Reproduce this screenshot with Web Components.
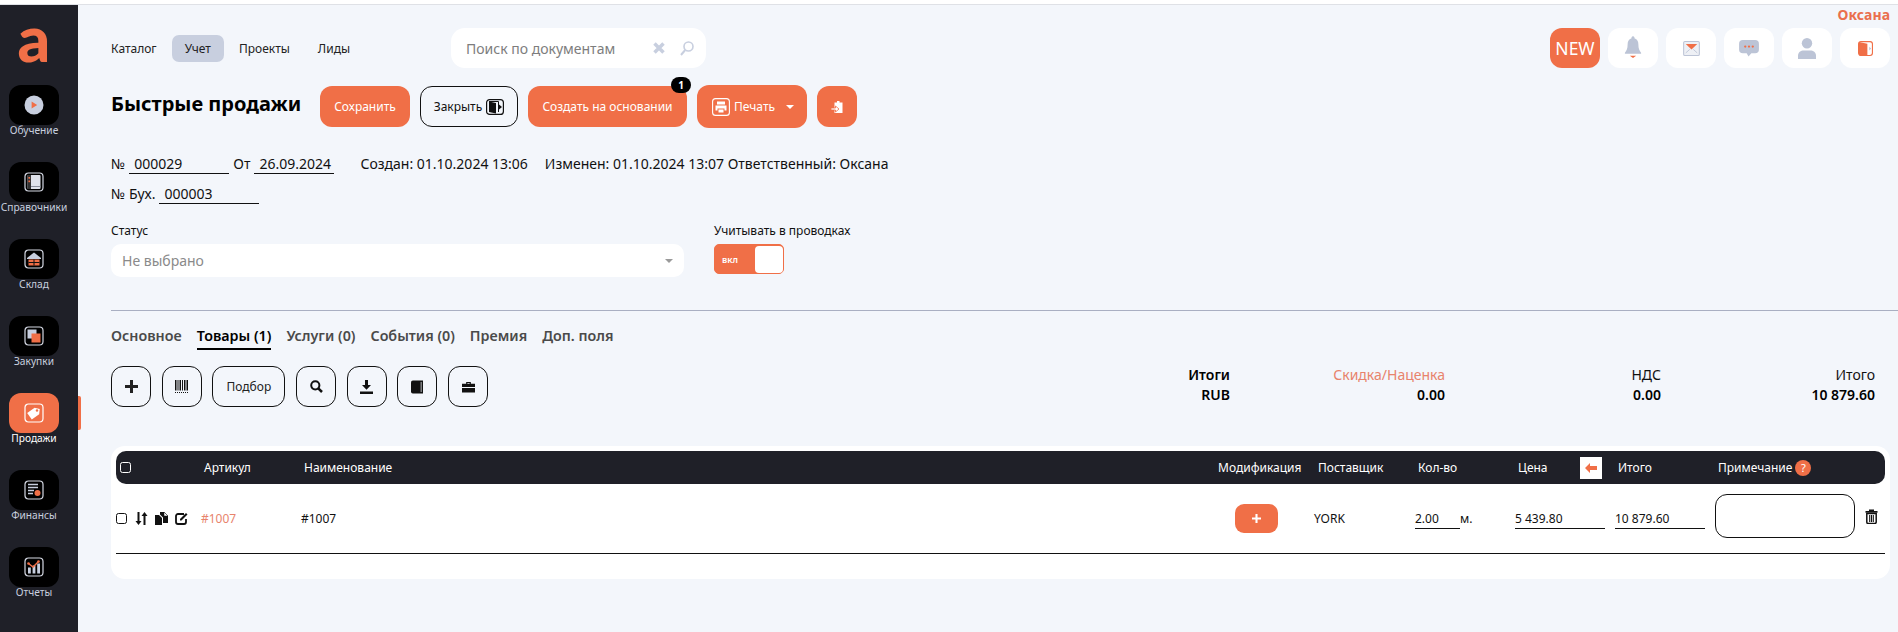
<!DOCTYPE html>
<html lang="ru">
<head>
<meta charset="utf-8">
<title>Быстрые продажи</title>
<style>
  html, body { margin: 0; height: 100%; background: #f3f6fb; }
  body { font-family: 'Noto Sans', 'Open Sans', sans-serif; color: #000; overflow: hidden; }
</style>
</head>
<body>
<erp-app></erp-app>

<script>
const ORANGE = '#f06f47';

const frame = (stroke, inner) => `<svg width="20" height="20" viewBox="0 0 20 20"><rect x="1" y="1" width="18" height="18" rx="3.5" fill="none" stroke="${stroke}" stroke-width="1.2"/>${inner}</svg>`;

const icons = {
  play: `<svg width="20" height="20" viewBox="0 0 20 20"><circle cx="10" cy="10" r="9.5" fill="#c8cfdf"/><path d="M7.6 6.6l5.6 3.4-5.6 3.4z" fill="${ORANGE}"/></svg>`,
  book: frame('#d5d9e4', `<rect x="3.500" y="3" width="13" height="14" rx="1" fill="#dfe2ea"/><rect x="3.500" y="3" width="3.500" height="14" fill="#333"/><rect x="4.400" y="5" width="1.700" height="1.700" fill="${ORANGE}"/><rect x="4.400" y="8.500" width="1.700" height="1.700" fill="${ORANGE}"/><path d="M7 14.500h9.500" stroke="#8a8f9c" stroke-width="1"/>`),
  store: frame('#d5d9e4', `<path d="M3 9l7-5.500L17 9v1H3z" fill="#c8cfdf"/><rect x="4.500" y="10.500" width="11" height="6" fill="${ORANGE}"/><path d="M10 10.500v6M4.500 13.500h11" stroke="#111" stroke-width="1"/>`),
  purchase: frame('#d5d9e4', `<rect x="3.500" y="3.500" width="9" height="9" fill="#c8cfdf"/><rect x="7.500" y="7.500" width="9" height="9" fill="${ORANGE}"/>`),
  tag: frame('#fff', `<path d="M10 3L14 6.500V15.500H6V6.500z" transform="rotate(55 10 10)" fill="#fff"/><circle cx="13" cy="7.500" r="1.200" fill="${ORANGE}"/>`),
  finance: frame('#d5d9e4', `<path d="M4 4.500h10M4 7.500h10M4 10.500h6M4 13.500h5" stroke="#c8cfdf" stroke-width="1.600"/><circle cx="13.500" cy="13" r="3" fill="${ORANGE}"/>`),
  report: frame('#d5d9e4', `<rect x="4" y="10.500" width="2.800" height="6" fill="#c8cfdf"/><rect x="8.600" y="8.500" width="2.800" height="8" fill="#c8cfdf"/><rect x="13.200" y="6.500" width="2.800" height="10" fill="#c8cfdf"/><path d="M4.500 6.500l4.500 3.500 5.500-5.500" fill="none" stroke="${ORANGE}" stroke-width="1.400"/><circle cx="4.500" cy="6.500" r="1.300" fill="${ORANGE}"/><circle cx="14.500" cy="4.500" r="1.300" fill="${ORANGE}"/>`),
  bell: `<svg width="18" height="24" viewBox="0 0 20 26"><path d="M10 0a1.600 1.600 0 0 1 1.600 2.200C15 3.200 16 6 16 9.500c0 4 1 6.500 3 8.700v1.300H1v-1.300C3 16 4 13.500 4 9.500 4 6 5 3.200 8.400 2.200A1.600 1.600 0 0 1 10 0z" fill="#bcc4d6"/><path d="M6.500 21.500h7L10 24z" fill="${ORANGE}"/></svg>`,
  mail: `<svg width="17" height="15" viewBox="0 0 19 17"><rect x=".6" y=".6" width="17.800" height="15.800" rx="1.500" fill="#eef0f5" stroke="#bcc4d6" stroke-width="1.200"/><path d="M3 3.500h13L9.500 9.500z" fill="${ORANGE}"/><path d="M3 13.500l4.500-4M16 13.500l-4.500-4" stroke="#bcc4d6" stroke-width="1"/></svg>`,
  chat: `<svg width="20" height="17" viewBox="0 0 21 18"><path d="M4 0h13a4 4 0 0 1 4 4v6a4 4 0 0 1-4 4h-4l-3 3.500L8 14H4a4 4 0 0 1-4-4V4a4 4 0 0 1 4-4z" fill="#bcc4d6"/><circle cx="6.500" cy="7" r="1.200" fill="${ORANGE}"/><circle cx="10.500" cy="7" r="1.200" fill="${ORANGE}"/><circle cx="14.500" cy="7" r="1.200" fill="${ORANGE}"/></svg>`,
  user: `<svg width="18" height="21" viewBox="0 0 19 22"><circle cx="9.500" cy="5.500" r="5.500" fill="#bcc4d6"/><path d="M0 22v-3.500C0 15 3 13 6 13h7c3 0 6 2 6 5.500V22z" fill="#bcc4d6"/></svg>`,
  doorTop: `<svg width="15" height="15" viewBox="0 0 16 16"><rect x=".6" y=".6" width="14.800" height="14.800" rx="2.500" fill="#fff" stroke="${ORANGE}" stroke-width="1.200"/><path d="M1 1l9 2v12H1z" fill="${ORANGE}"/><path d="M12 6l2 2-2 2z" fill="#bcc4d6"/></svg>`,
  door: `<svg width="18" height="16" viewBox="0 0 18 16"><rect x=".6" y=".6" width="16.800" height="14.800" rx="3" fill="none" stroke="#111" stroke-width="1.200"/><path d="M3 2.500L10 4v10.500L3 13z" fill="#111"/><path d="M3 2.500h9.500V13" fill="none" stroke="#111" stroke-width="1"/><path d="M13 5.500l3 2.500-3 2.500z" fill="#111"/></svg>`,
  printer: `<svg width="18" height="18" viewBox="0 0 18 18"><rect x=".6" y=".6" width="16.800" height="16.800" rx="3" fill="none" stroke="#fff" stroke-width="1.100"/><path d="M5 3.500h8v3H5zM3.500 7.500h11v5h-2v-2h-7v2h-2zM6.500 11.500h5v3h-5z" fill="#fff"/></svg>`,
  clip: `<svg width="12" height="12" viewBox="0 0 12 12"><path d="M3.500 1.500H6V0h2.500v1.500H11.500V12H3.500z" fill="#fff"/><path d="M0 7h4.500V5L8 8 4.500 11V9H0z" fill="#fff" stroke="${ORANGE}" stroke-width=".8"/></svg>`,
  plus: `<svg width="13" height="13" viewBox="0 0 13 13"><path d="M5 0h3v5h5v3H8v5H5V8H0V5h5z" fill="currentColor"/></svg>`,
  barcode: `<svg width="13" height="13" viewBox="0 0 13 13"><path d="M0 0h1.500v10.500H0zM2.500 0h1v10.500h-1zM4.500 0h1.500v10.500H4.500zM7 0h1v10.500H7zM9 0h1.500v10.500H9zM11.500 0H13v10.500h-1.500z" fill="#111"/><path d="M0 12.500h13" stroke="#111" stroke-dasharray="1 1"/></svg>`,
  search: `<svg width="13" height="13" viewBox="0 0 13 13"><circle cx="5.300" cy="5.300" r="4.100" fill="none" stroke="#111" stroke-width="2"/><path d="M8.300 8.300l3.700 3.700" stroke="#111" stroke-width="2.500"/></svg>`,
  download: `<svg width="13" height="14" viewBox="0 0 13 14"><path d="M5 0h3v5h3L6.500 9.800 2 5h3zM0 11.500h13V14H0z" fill="#111"/></svg>`,
  bookTool: `<svg width="12" height="14" viewBox="0 0 13 14"><path d="M2 0h11v14H2a2 2 0 0 1-2-2V2a2 2 0 0 1 2-2z" fill="#111"/><path d="M11 1.500V12.500" stroke="#f3f6fb" stroke-width=".8"/></svg>`,
  case: `<svg width="13" height="12" viewBox="0 0 14 12"><path d="M4.500 2.500V.5h5v2H14v3.500H0V2.500zM5.800 2.500h2.400V1.600H5.800zM0 7h14v5H0z" fill="#111"/></svg>`,
  sort: `<svg width="13" height="13" viewBox="0 0 13 13"><path d="M2.500 0h2v9h2L3.500 13 .5 9h2zM8.500 13h2V4h2L9.500 0l-3 4h2z" fill="#111"/></svg>`,
  copy: `<svg width="13" height="13" viewBox="0 0 13 13"><path d="M0 3h4l3 3v7H0z" fill="#111"/><path d="M5 0h4l4 4v7H8V5.500L5 2.500z" fill="#111"/><path d="M9 0v4h4z" fill="#fff" stroke="#111" stroke-width=".5"/></svg>`,
  edit: `<svg width="13" height="13" viewBox="0 0 13 13"><path d="M9 2H3a2 2 0 0 0-2 2v6a2 2 0 0 0 2 2h6a2 2 0 0 0 2-2V7" fill="none" stroke="#111" stroke-width="1.800"/><path d="M5 8.500V7l6-6 1.500 1.500-6 6z" fill="#111"/></svg>`,
  trash: `<svg width="13" height="15" viewBox="0 0 13 15"><path d="M4 2V.5h5V2h3.500v1.800H.5V2z" fill="#111"/><path d="M1.800 4.500h9.400V13a1.600 1.600 0 0 1-1.600 1.600H3.400A1.600 1.600 0 0 1 1.800 13z" fill="none" stroke="#111" stroke-width="1.500"/><path d="M4.700 6v7M6.500 6v7M8.300 6v7" stroke="#111" stroke-width="1.100"/></svg>`,
  arrow: `<svg width="12" height="10" viewBox="0 0 12 10"><path d="M0 5l5-5v3h7v4H5v3z" fill="${ORANGE}"/></svg>`,
  cross: `<svg width="12" height="12" viewBox="0 0 12 12"><path d="M1.500 1.500l9 9M10.500 1.500l-9 9" stroke="#c8cfdf" stroke-width="3.500"/></svg>`,
  lens: `<svg width="14" height="15" viewBox="0 0 14 15"><circle cx="8.500" cy="5.500" r="4.500" fill="none" stroke="#c8cfdf" stroke-width="1.600"/><path d="M5.200 9L1 14" stroke="#c8cfdf" stroke-width="2"/></svg>`
};

class Part extends HTMLElement {
  constructor() {
    super();
    this.attachShadow({ mode: 'open' });
  }

  connectedCallback() {
    this.shadowRoot.innerHTML = `<style>${this.getStyles()}</style>${this.getMarkup()}`;
  }

  getStyles() { return ':host { display: block; }'; }
  getMarkup() { return '<slot></slot>'; }
}

class SideItem extends Part {
  getStyles() {
    return `
      :host { display: flex; flex-direction: column; align-items: center; height: 77px; position: relative; }
      .tile {
        width: 50px; height: 40px; border-radius: 12px; background: #000;
        display: flex; align-items: center; justify-content: center;
      }
      :host([active]) .tile { background: ${ORANGE}; }
      .label { font-size: 10.2px; line-height: 14px; margin-top: -2px; color: #c8cfdf; white-space: nowrap; }
      :host([active]) .label { color: #fff; }
      :host([active])::after {
        content: ''; position: absolute; left: 78px; top: 3px;
        width: 3px; height: 34px; background: ${ORANGE}; border-radius: 0 2px 2px 0;
      }
    `;
  }

  getMarkup() {
    return `<div class="tile">${icons[this.getAttribute('icon')]}</div><div class="label"><slot></slot></div>`;
  }
}

class SideBar extends Part {
  getStyles() {
    return `
      :host { display: flex; flex-direction: column; width: 78px; flex: none; background: #1f2028; box-sizing: border-box; height: 627px; padding-right: 10px; }
      .logo {
        height: 80px; text-align: center;
        font: 900 64px/66px Lato, 'Noto Sans', sans-serif; color: ${ORANGE};
      }
    `;
  }

  getMarkup() {
    return `
      <div class="logo">a</div>
      <side-item icon="play">Обучение</side-item>
      <side-item icon="book">Справочники</side-item>
      <side-item icon="store">Склад</side-item>
      <side-item icon="purchase">Закупки</side-item>
      <side-item icon="tag" active>Продажи</side-item>
      <side-item icon="finance">Финансы</side-item>
      <side-item icon="report">Отчеты</side-item>
    `;
  }
}

class TopBar extends Part {
  getStyles() {
    return `
      :host { display: block; }
      .who { height: 23px; text-align: right; padding-right: 8px; font-size: 14px; line-height: 20px; font-weight: 700; color: #ea6f4d; }
      .row { display: flex; align-items: center; height: 40px; }
      nav { display: flex; align-items: center; gap: 2px; width: 353px; margin-left: -13px; flex: none; font-size: 12px; color: #222; }
      nav span { padding: 0 13px; height: 27px; line-height: 27px; border-radius: 7px; }
      nav .on { background: #c8cfdf; }
      .search {
        width: 255px; height: 40px; box-sizing: border-box; background: #fff; border-radius: 14px;
        padding: 0 12px 0 15px; display: flex; align-items: center; font-size: 14px; color: #7d7d7d;
      }
      .search span { flex: 1; }
      .search svg + svg { margin-left: 15px; }
      .tools { margin-left: auto; display: flex; gap: 8px; padding-right: 8px; }
      .tile { width: 50px; height: 40px; border-radius: 12px; background: #fff; display: flex; align-items: center; justify-content: center; }
      .new { background: ${ORANGE}; color: #fff; font-size: 17.5px; }
    `;
  }

  getMarkup() {
    return `
      <div class="who">Оксана</div>
      <div class="row">
        <nav><span>Каталог</span><span class="on">Учет</span><span>Проекты</span><span>Лиды</span></nav>
        <div class="search"><span>Поиск по документам</span>${icons.cross}${icons.lens}</div>
        <div class="tools">
          <div class="tile new">NEW</div>
          <div class="tile">${icons.bell}</div>
          <div class="tile">${icons.mail}</div>
          <div class="tile">${icons.chat}</div>
          <div class="tile">${icons.user}</div>
          <div class="tile">${icons.doorTop}</div>
        </div>
      </div>
    `;
  }
}

class ActionButton extends Part {
  getStyles() {
    return `
      :host {
        display: inline-flex; align-items: center; justify-content: center; gap: 4px; position: relative;
        height: 41px; box-sizing: border-box; border-radius: 12px; font-size: 12px; white-space: nowrap;
        background: ${ORANGE}; color: #fff;
      }
      :host([outline]) { background: transparent; color: #111; border: 1.3px solid #111; }
      .badge {
        position: absolute; right: -4px; top: -9px; width: 20px; height: 16px; border-radius: 8px;
        background: #000; color: #fff; font-size: 10px; font-weight: 700; line-height: 16px; text-align: center;
      }
    `;
  }

  getMarkup() {
    const badge = this.getAttribute('badge');
    return `<slot></slot>${badge ? `<span class="badge">${badge}</span>` : ''}`;
  }
}

class DocHead extends Part {
  getStyles() {
    return `
      :host { display: flex; align-items: center; height: 43px; margin-top: 17px; }
      h1 { margin: 0 20px 5px 0; width: 189px; font-size: 20px; line-height: 28px; font-weight: 700; white-space: nowrap; }
      .acts { display: flex; gap: 10px; align-items: center; }
      .caret { width: 0; height: 0; border: 4px solid transparent; border-top: 4px solid #fff; border-bottom: 0; margin-left: 7px; }
      .print { height: 43px; width: 110px; padding-left: 2px; }
    `;
  }

  getMarkup() {
    return `
      <h1>Быстрые продажи</h1>
      <div class="acts">
        <action-button style="width:90px">Сохранить</action-button>
        <action-button outline style="width:98px">Закрыть ${icons.door}</action-button>
        <action-button badge="1" style="width:159px">Создать на основании</action-button>
        <action-button class="print">${icons.printer}Печать<span class="caret"></span></action-button>
        <action-button style="width:40px">${icons.clip}</action-button>
      </div>
    `;
  }
}

class DocMeta extends Part {
  getStyles() {
    return `
      :host { display: block; font-size: 14px; margin-top: 26px; color: #111; }
      .row { display: flex; align-items: flex-end; height: 20px; line-height: 20px; white-space: nowrap; }
      .row + .row { margin-top: 10px; }
      .inp { border-bottom: 1px solid #111; padding-left: 5px; box-sizing: border-box; height: 20px; margin: 0 4px 0 4px; }
      .sp { margin-left: 22px; }
      .sp2 { margin-left: 17px; }
    `;
  }

  getMarkup() {
    return `
      <div class="row">№<span class="inp" style="width:100px">000029</span>От<span class="inp" style="width:80px">26.09.2024</span>
        <span class="sp">Создан: 01.10.2024 13:06</span><span class="sp2">Изменен: 01.10.2024 13:07 Ответственный: Оксана</span></div>
      <div class="row">№ Бух.<span class="inp" style="width:100px">000003</span></div>
    `;
  }
}

class DocStatus extends Part {
  getStyles() {
    return `
      :host { display: flex; margin-top: 18px; padding-bottom: 33px; border-bottom: 1px solid #a9afc2; font-size: 12px; color: #111; }
      .lab { height: 22px; line-height: 17px; }
      .status { width: 573px; margin-right: 30px; }
      .select {
        height: 33px; border-radius: 10px; background: #fff; display: flex; align-items: center; justify-content: space-between;
        padding: 0 11px; font-size: 14px; color: #8a8a8a;
      }
      .select i { width: 0; height: 0; border: 4px solid transparent; border-top: 4px solid #9a9a9a; border-bottom: 0; }
      .toggle {
        width: 70px; height: 30px; box-sizing: border-box; border: 1.5px solid ${ORANGE}; border-radius: 5px; background: ${ORANGE};
        display: flex; align-items: center; justify-content: space-between; padding-left: 7px; color: #fff; font-size: 9px; font-weight: 600;
      }
      .toggle b { width: 28px; height: 27px; background: #fff; border-radius: 4px; }
    `;
  }

  getMarkup() {
    return `
      <div class="status"><div class="lab">Статус</div><div class="select">Не выбрано<i></i></div></div>
      <div><div class="lab">Учитывать в проводках</div><div class="toggle">вкл<b></b></div></div>
    `;
  }
}

class DocTabs extends Part {
  getStyles() {
    return `
      :host { display: flex; gap: 15px; margin-top: 14px; font-size: 14.3px; font-weight: 600; color: #4a4a4a; white-space: nowrap; }
      span { height: 25px; line-height: 21px; box-sizing: border-box; }
      .on { color: #000; border-bottom: 2px solid #000; height: 25px; }
    `;
  }

  getMarkup() {
    return `<span>Основное</span><span class="on">Товары (1)</span><span>Услуги (0)</span><span>События (0)</span><span>Премия</span><span>Доп. поля</span>`;
  }
}

class GoodsToolbar extends Part {
  getStyles() {
    return `
      :host { display: flex; align-items: flex-start; height: 41px; margin-top: 16px; }
      .tools { display: flex; gap: 10.7px; }
      .btn {
        width: 40px; height: 41px; box-sizing: border-box; border: 1.200px solid #111; border-radius: 12px;
        display: flex; align-items: center; justify-content: center; font-size: 12px; color: #222;
      }
      .wide { width: 73px; }
      .totals { margin: -1px 0 0 auto; padding-right: 23px; display: grid; grid-template-columns: 120px 215px 216px 214px; font-size: 14px; line-height: 20px; text-align: right; color: #111; }
      .totals b { font-weight: 600; color: #000; }
      .pink { color: #e8836c; }
    `;
  }

  getMarkup() {
    return `
      <div class="tools">
        <div class="btn">${icons.plus}</div>
        <div class="btn">${icons.barcode}</div>
        <div class="btn wide">Подбор</div>
        <div class="btn">${icons.search}</div>
        <div class="btn">${icons.download}</div>
        <div class="btn">${icons.bookTool}</div>
        <div class="btn">${icons.case}</div>
      </div>
      <div class="totals">
        <b>Итоги</b><span class="pink">Скидка/Наценка</span><span>НДС</span><span>Итого</span>
        <b>RUB</b><b>0.00</b><b>0.00</b><b>10 879.60</b>
      </div>
    `;
  }
}

class GoodsTable extends Part {
  getStyles() {
    return `
      :host { display: block; margin: 39px 8px 0 0; background: #fff; border-radius: 14px; padding: 5px 5px 0; height: 133px; box-sizing: border-box; font-size: 12px; }
      .grid { display: grid; grid-template-columns: 85px 100px 914px 99px 101px 100px 100px 100px 150px 1fr; align-items: center; }
      .head { height: 33px; background: #1f2028; color: #fff; border-radius: 10px; }
      .head > div { padding-left: 3px; display: flex; align-items: center; }
      .check { width: 9px; height: 9px; border: 1.200px solid #fff; border-radius: 2.500px; background: #1f2028; margin-left: 1px; }
      .arrow { width: 22px; height: 22px; background: #fff; display: flex; align-items: center; justify-content: center; margin: 0 13px 0 auto; }
      .qmark { width: 16px; height: 16px; border-radius: 50%; background: ${ORANGE}; color: #fff; text-align: center; line-height: 16px; font-size: 11px; margin-left: 3px; }
      .row { height: 69px; border-bottom: 1px solid #111; color: #111; }
      .ctl { display: flex; align-items: center; gap: 7px; }
      .box { width: 9px; height: 9px; border: 1.200px solid #111; border-radius: 2.500px; flex: none; margin-right: 1px; }
      .link { color: #e8836c; }
      .add { width: 43px; height: 29px; border-radius: 9px; background: ${ORANGE}; color: #fff; display: flex; align-items: center; justify-content: center; margin-left: 20px; }
      .u { display: flex; align-items: flex-end; height: 20px; }
      .u span { border-bottom: 1px solid #111; height: 20px; line-height: 20px; display: block; box-sizing: border-box; width: 90px; }
      .u .qty { width: 45px; }
      .u em { font-style: normal; line-height: 20px; }
      .note { width: 140px; height: 44px; box-sizing: border-box; border: 1.200px solid #111; border-radius: 12px; margin-top: -5px; }
    `;
  }

  getMarkup() {
    return `
      <div class="grid head">
        <div><span class="check"></span></div>
        <div>Артикул</div>
        <div>Наименование</div>
        <div>Модификация</div>
        <div style="padding-left:4px">Поставщик</div>
        <div>Кол-во</div>
        <div>Цена<span class="arrow">${icons.arrow}</span></div>
        <div>Итого</div>
        <div>Примечание<span class="qmark">?</span></div>
        <div></div>
      </div>
      <div class="grid row">
        <div class="ctl"><span class="box"></span>${icons.sort}${icons.copy}${icons.edit}</div>
        <div class="link">#1007</div>
        <div>#1007</div>
        <div><span class="add"><svg width="9" height="9" viewBox="0 0 13 13"><path d="M5 0h3v5h5v3H8v5H5V8H0V5h5z" fill="#fff"/></svg></span></div>
        <div>YORK</div>
        <div class="u"><span class="qty">2.00</span><em>м.</em></div>
        <div class="u"><span>5 439.80</span></div>
        <div class="u"><span>10 879.60</span></div>
        <div><div class="note"></div></div>
        <div>${icons.trash}</div>
      </div>
    `;
  }
}

class ErpApp extends Part {
  getStyles() {
    return `
      :host { display: block; height: 632px; overflow: hidden; }
      .strip { height: 4px; background: #fff; border-bottom: 1px solid #dfe1e6; }
      .shell { display: flex; }
      main { flex: 1; min-width: 0; padding-left: 33px; }
    `;
  }

  getMarkup() {
    return `
      <div class="strip"></div>
      <div class="shell">
        <side-bar></side-bar>
        <main>
          <top-bar></top-bar>
          <doc-head></doc-head>
          <doc-meta></doc-meta>
          <doc-status></doc-status>
          <doc-tabs></doc-tabs>
          <goods-toolbar></goods-toolbar>
          <goods-table></goods-table>
        </main>
      </div>
    `;
  }
}

customElements.define('side-item', SideItem);
customElements.define('side-bar', SideBar);
customElements.define('top-bar', TopBar);
customElements.define('action-button', ActionButton);
customElements.define('doc-head', DocHead);
customElements.define('doc-meta', DocMeta);
customElements.define('doc-status', DocStatus);
customElements.define('doc-tabs', DocTabs);
customElements.define('goods-toolbar', GoodsToolbar);
customElements.define('goods-table', GoodsTable);
customElements.define('erp-app', ErpApp);
</script>
</body>
</html>
